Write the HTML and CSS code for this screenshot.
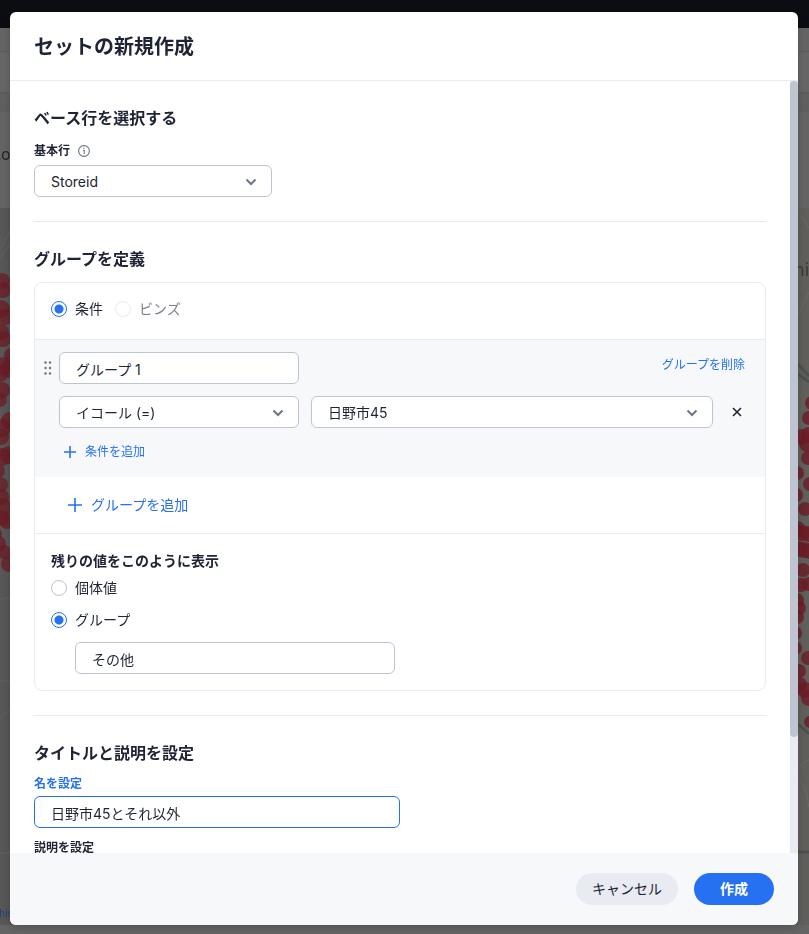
FILE: index.html
```html
<!DOCTYPE html>
<html lang="ja">
<head>
    <meta charset="UTF-8">
    <meta name="viewport" content="width=device-width, initial-scale=1.0">
    <title>セットの新規作成</title>
    <link rel="stylesheet" href="styles.css">
</head>
<body>

    <!-- Dimmed page behind the dialog -->
    <div class="page" aria-hidden="true">
        <div class="page-top"></div>
        <div class="page-nav"></div>
        <div class="page-tools"></div>
        <div class="page-tabs"></div>
        <div class="page-title"><span>Lo</span></div>
        <div class="page-map">
            <svg class="map" width="100%" height="100%">
                <!-- west side -->
                <rect width="50%" height="100%" fill="#575757"/>
                <g fill="none" stroke="#626262" stroke-width="1">
                    <path d="M0 42L10 22M0 50L10 36M0 392Q6 388 10 392M0 474Q6 470 10 474M0 510Q6 502 10 504M0 645H10"/>
                </g>
                <g fill="#6b1c25" fill-opacity="0.75">
                    <circle cx="2" cy="73" r="8"/><circle cx="3" cy="82" r="8"/><circle cx="1" cy="101" r="9"/>
                    <circle cx="5" cy="109" r="8"/><circle cx="1" cy="124" r="8"/><circle cx="3" cy="131" r="8"/>
                    <circle cx="11" cy="147" r="7"/><circle cx="4" cy="158" r="9"/><circle cx="9" cy="161" r="9"/>
                    <circle cx="0" cy="166" r="8"/><circle cx="2" cy="182" r="8"/><circle cx="0" cy="192" r="7"/>
                    <circle cx="10" cy="213" r="9"/><circle cx="2" cy="220" r="9"/><circle cx="1" cy="229" r="8"/>
                    <circle cx="9" cy="247" r="9"/><circle cx="2" cy="249" r="9"/><circle cx="-2" cy="263" r="7"/>
                    <circle cx="0" cy="277" r="8"/><circle cx="1" cy="289" r="8"/><circle cx="3" cy="299" r="9"/>
                    <circle cx="1" cy="310" r="8"/><circle cx="7" cy="313" r="8"/><circle cx="-5" cy="326" r="7"/>
                    <circle cx="-2" cy="336" r="8"/><circle cx="4" cy="344" r="7"/><circle cx="9" cy="356" r="8"/>
                </g>
                <!-- east side -->
                <svg class="map-east" x="100%">
                    <rect x="-200" width="200" height="800" fill="#605f5c"/>
                    <g fill="none" stroke="#696865" stroke-width="1">
                        <path d="M-12 2L0 20M-12 110L0 84M-11 560Q-2 552 0 552M-11 572Q-2 578 0 600"/>
                    </g>
                    <path d="M-11 156L0 168M-11 166L0 174M-11 516L0 526" fill="none" stroke="#4b5051" stroke-width="3"/>
                    <path d="M-11 644H0" stroke="#4d504f" stroke-width="3"/>
                    <g fill="#6b1c25" fill-opacity="0.8">
                        <circle cx="3" cy="195" r="7"/><circle cx="0" cy="210" r="7"/><circle cx="-7" cy="229" r="8"/>
                        <circle cx="0" cy="227" r="8"/><circle cx="-2" cy="236" r="8"/><circle cx="-1" cy="250" r="7"/>
                        <circle cx="-12" cy="265" r="7"/><circle cx="1" cy="276" r="7"/><circle cx="-13" cy="287" r="7"/>
                        <circle cx="-4" cy="301" r="7"/><circle cx="-12" cy="321" r="8"/><circle cx="-7" cy="325" r="8"/>
                        <circle cx="0" cy="326" r="8"/><circle cx="-11" cy="341" r="8"/><circle cx="-5" cy="342" r="8"/>
                        <circle cx="1" cy="343" r="8"/><circle cx="-6" cy="362" r="7"/><circle cx="-8" cy="377" r="7"/>
                        <circle cx="0" cy="376" r="7"/><circle cx="-12" cy="392" r="7"/><circle cx="-10" cy="400" r="7"/>
                        <circle cx="-12" cy="409" r="7"/><circle cx="-14" cy="425" r="7"/><circle cx="-14" cy="440" r="7"/>
                        <circle cx="-1" cy="450" r="7"/><circle cx="-10" cy="463" r="7"/><circle cx="-10" cy="477" r="8"/>
                        <circle cx="-4" cy="482" r="8"/><circle cx="0" cy="490" r="8"/><circle cx="1" cy="514" r="6"/>
                    </g>
                </svg>
            </svg>
            <span class="map-label">Unit</span>
            <span class="map-credit">this</span>
        </div>
    </div>

    <!-- Dialog -->
    <form class="modal" role="dialog" aria-labelledby="modal-title">
        <header class="modal-header">
            <h1 id="modal-title">セットの新規作成</h1>
        </header>

        <div class="modal-main">
            <div class="modal-body">
                <section class="section">
                    <h2>ベース行を選択する</h2>
                    <div class="label-row">
                        <label class="label" for="base-row">基本行</label>
                        <svg class="info" width="12" height="12" viewBox="0 0 12 12" fill="none" stroke="#6d7586">
                            <circle cx="6" cy="6" r="5.4" stroke-width="1.1"/>
                            <path d="M5 5.500h1.300v3.500M6 2.800v1.200" stroke-width="1.100"/>
                        </svg>
                    </div>
                    <div class="select base-select">
                        <select id="base-row"><option>Storeid</option></select>
                        <svg class="chevron" width="12" height="8" viewBox="0 0 12 8"><path d="M1.500 1.500L6 6l4.500-4.500"/></svg>
                    </div>
                </section>

                <section class="section">
                    <h2>グループを定義</h2>
                    <div class="card">
                        <div class="type-row">
                            <label class="radio"><input type="radio" name="type" checked>条件</label>
                            <label class="radio disabled"><input type="radio" name="type" disabled>ビンズ</label>
                        </div>

                        <div class="group">
                            <div class="group-row">
                                <svg class="handle" width="8" height="14" viewBox="0 0 8 14" fill="#6d7586">
                                    <circle cx="1.500" cy="1.500" r="1.200"/><circle cx="6" cy="1.500" r="1.200"/>
                                    <circle cx="1.500" cy="7" r="1.200"/><circle cx="6" cy="7" r="1.200"/>
                                    <circle cx="1.500" cy="12.500" r="1.200"/><circle cx="6" cy="12.500" r="1.200"/>
                                </svg>
                                <input class="field" type="text" value="グループ 1" aria-label="グループ名">
                                <button type="button" class="link-btn delete-btn">グループを削除</button>
                            </div>
                            <div class="group-row">
                                <div class="select operator">
                                    <select aria-label="演算子"><option>イコール (=)</option></select>
                                    <svg class="chevron" width="12" height="8" viewBox="0 0 12 8"><path d="M1.500 1.500L6 6l4.500-4.500"/></svg>
                                </div>
                                <div class="select value">
                                    <select aria-label="値"><option>日野市45</option></select>
                                    <svg class="chevron" width="12" height="8" viewBox="0 0 12 8"><path d="M1.500 1.500L6 6l4.500-4.500"/></svg>
                                </div>
                                <button type="button" class="remove-btn" aria-label="条件を削除">
                                    <svg width="10" height="10" viewBox="0 0 10 10"><path d="M1 1l8 8M9 1L1 9"/></svg>
                                </button>
                            </div>
                            <button type="button" class="link-btn add-condition">
                                <svg width="12" height="12" viewBox="0 0 12 12"><path d="M6 0v12M0 6h12"/></svg>条件を追加
                            </button>
                        </div>

                        <div class="add-row">
                            <button type="button" class="link-btn add-group">
                                <svg width="14" height="14" viewBox="0 0 14 14"><path d="M7 0v14M0 7h14"/></svg>グループを追加
                            </button>
                        </div>

                        <fieldset class="rest">
                            <legend>残りの値をこのように表示</legend>
                            <label class="radio"><input type="radio" name="rest">個体値</label>
                            <label class="radio"><input type="radio" name="rest" checked>グループ</label>
                            <input class="field rest-name" type="text" value="その他" aria-label="残りのグループ名">
                        </fieldset>
                    </div>
                </section>

                <section class="section">
                    <h2>タイトルと説明を設定</h2>
                    <label class="label active" for="set-name">名を設定</label>
                    <input class="field half active" id="set-name" type="text" value="日野市45とそれ以外">
                    <label class="label" for="set-desc">説明を設定</label>
                    <textarea class="field half" id="set-desc"></textarea>
                </section>
            </div>
            <div class="scrollbar"><div class="scrollbar-thumb"></div></div>
        </div>

        <footer class="modal-footer">
            <button type="button" class="btn">キャンセル</button>
            <button type="submit" class="btn primary">作成</button>
        </footer>
    </form>

</body>
</html>
```
FILE: styles.css
```css
* {
    margin: 0;
    padding: 0;
    box-sizing: border-box;
}
body {
    height: 100vh;
    padding: 12px 11px 9px 10px;
    overflow: hidden;
    background: #5f5f5f;
    color: #1d2433;
    font-family: Inter, "Noto Sans CJK JP", sans-serif;
    font-size: 14px;
    line-height: 24px;
}
button, input, select, textarea {
    font: inherit;
    color: inherit;
}

/* Page behind */
.page {
    position: fixed;
    inset: 0;
    display: flex;
    flex-direction: column;
    background: #646464;
    color: #22242a;
}
.page-top {
    height: 28px;
    background: #0c0d12;
}
.page-nav {
    height: 24px;
    border-bottom: 1px solid #5b5c5f;
}
.page-tools {
    height: 41px;
    background: #666;
    border-bottom: 1px solid #5b5c5f;
}
.page-tabs {
    height: 19px;
    background: #606060;
    border-bottom: 1px solid #5d5e60;
}
.page-title {
    height: 96px;
    padding-top: 30px;
    font-size: 16px;
}
.page-title span {
    margin-left: -8px;
}
.page-map {
    position: relative;
    flex: 1;
    margin-bottom: 9px;
    overflow: hidden;
}
.map {
    display: block;
}
.map-east {
    overflow: visible;
}
.map-label {
    position: absolute;
    top: 50px;
    right: -6px;
    color: #3b3b3b;
    font-size: 18px;
}
.map-credit {
    position: absolute;
    left: -4px;
    bottom: 0;
    color: #1f3f7c;
    font-size: 10px;
}

/* Dialog */
.modal {
    position: relative;
    display: flex;
    flex-direction: column;
    height: 100%;
    background: #fff;
    border-radius: 6px;
    box-shadow: 0 2px 8px rgba(0, 0, 0, 0.2);
    overflow: hidden;
}
.modal-header {
    padding: 23px 24px 21px;
    border-bottom: 1px solid #e8ebf1;
}
h1 {
    font-size: 20px;
    line-height: 24px;
}
h2 {
    margin-bottom: 10px;
    font-size: 16px;
    line-height: 26px;
}
.modal-main {
    display: flex;
    flex: 1;
    min-height: 0;
}
.modal-body {
    flex: 1;
    overflow-y: auto;
    scrollbar-width: none;
}
.scrollbar {
    width: 8px;
    background: #e8ecf2;
}
.scrollbar-thumb {
    height: 85%;
    background: #bec5d0;
    border-radius: 4px;
}
.section {
    margin: 0 24px;
    padding: 24px 0;
    border-bottom: 1px solid #e8eaed;
}
.section:last-child {
    border-bottom: none;
}

/* Fields */
.label-row {
    display: flex;
    align-items: center;
    gap: 8px;
    height: 20px;
    margin-bottom: 4px;
}
.label {
    display: block;
    margin-bottom: 4px;
    font-size: 12px;
    font-weight: 700;
    line-height: 16px;
}
.label-row .label {
    margin-bottom: 0;
}
.label.active {
    color: #2671f2;
}
.field, .select select {
    display: block;
    width: 240px;
    height: 32px;
    padding: 2px 16px 0;
    border: 1px solid #bdc4cf;
    border-radius: 6px;
    background: #fff;
    outline: none;
}
.field.half {
    width: 50%;
    margin-bottom: 12px;
}
.field.active {
    border-color: #2671f2;
}
textarea.field.half {
    height: 105px;
    margin-bottom: 0;
    resize: none;
}
.select {
    position: relative;
}
.select select {
    width: 100%;
    appearance: none;
}
.chevron {
    position: absolute;
    top: 13px;
    right: 15px;
    fill: none;
    stroke: #6d7586;
    stroke-width: 2;
    pointer-events: none;
}
.base-select {
    width: 238px;
}

/* Radios */
.radio {
    display: flex;
    align-items: center;
    gap: 8px;
}
.radio input {
    width: 16px;
    height: 16px;
    appearance: none;
    border: 1px solid #bdc4cf;
    border-radius: 50%;
    background: #fff;
}
.radio input:checked {
    border-color: #2671f2;
    background: radial-gradient(#2671f2 4px, #fff 5px);
}
.radio.disabled {
    color: #7c818b;
}
.radio.disabled input {
    border-color: #e8ebf1;
}

/* Group card */
.card {
    border: 1px solid #e8ebf1;
    border-radius: 8px;
}
.type-row {
    display: flex;
    gap: 12px;
    padding: 14px 16px 18px;
    border-bottom: 1px solid #e8ebf1;
}
.group {
    padding: 12px 16px 13px 24px;
    background: #f6f8fa;
}
.group-row {
    position: relative;
    display: flex;
    gap: 12px;
    margin-bottom: 12px;
}
.handle {
    position: absolute;
    top: 9px;
    left: -15px;
}
.operator {
    width: 240px;
}
.value {
    flex: 1;
}
.link-btn {
    display: flex;
    align-items: center;
    border: none;
    background: none;
    color: #2671f2;
    cursor: pointer;
}
.link-btn svg {
    fill: none;
    stroke: #2671f2;
    stroke-width: 1.6;
}
.delete-btn {
    height: 26px;
    margin-left: auto;
    padding: 0 4px;
    font-size: 12px;
}
.remove-btn {
    display: flex;
    align-items: center;
    justify-content: center;
    width: 24px;
    height: 32px;
    border: none;
    background: none;
    cursor: pointer;
}
.remove-btn svg {
    fill: none;
    stroke: #1d2433;
    stroke-width: 1.6;
}
.add-condition {
    gap: 9px;
    height: 24px;
    padding: 0 5px;
    font-size: 12px;
}
.add-row {
    padding: 16px 33px;
    border-bottom: 1px solid #e8ebf1;
}
.add-group {
    gap: 9px;
    height: 24px;
}
.rest {
    padding: 16px;
    border: none;
}
.rest legend {
    float: left;
    width: 100%;
    margin-bottom: 4px;
    font-weight: 700;
    line-height: 22px;
}
.rest .radio {
    clear: both;
    margin-bottom: 8px;
}
.rest-name {
    width: 320px;
    margin: 10px 0 0 24px;
}

/* Footer */
.modal-footer {
    display: flex;
    justify-content: flex-end;
    gap: 16px;
    padding: 20px 24px;
    background: #f6f8fa;
}
.btn {
    min-width: 80px;
    height: 32px;
    padding: 0 16px;
    border: none;
    border-radius: 16px;
    background: #e8ebf1;
    cursor: pointer;
}
.btn.primary {
    background: #2671f2;
    color: #fff;
    font-weight: 700;
}
```
